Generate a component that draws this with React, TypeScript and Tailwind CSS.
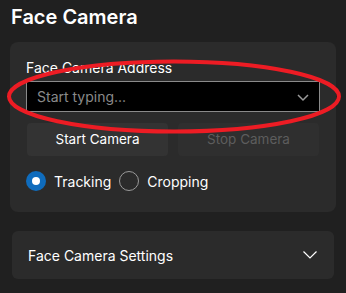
import React from "react";

export default function App() {
  return (
    <div
      className="relative w-[346px] h-[293px] overflow-hidden bg-[#202020] text-white"
      style={{ fontFamily: "Inter, 'Noto Sans', sans-serif" }}
    >
      <div className="pl-[11px] pt-[3px] h-[42px] text-[20px] leading-[28px] font-semibold">Face Camera</div>
      <div className="mx-[10px] rounded-[8px] bg-[#2b2b2b] px-4 pt-4 pb-[21px]">
        <div className="text-[14px] leading-[20px]">Face Camera Address</div>
        <div className="mt-[3px] h-[31px] flex items-center justify-between bg-black border border-[#8a8a8a] pl-[10px] pr-[9px]">
          <span className="text-[14px] text-[#8a8a8a]">Start typing...</span>
          <svg width="14" height="14" viewBox="0 0 14 14" fill="none">
            <path d="M2 5l5 5 5-5" stroke="#9a9a9a" strokeWidth="1.5" />
          </svg>
        </div>
        <div className="mt-[11px] flex gap-[10px] pl-px">
          <div className="h-[33px] w-[141px] flex items-center justify-center rounded-[4px] bg-[#333333] text-[13.5px]">Start Camera</div>
          <div className="h-[33px] w-[141px] flex items-center justify-center rounded-[4px] bg-[#2f2f2f] text-[13.5px] text-[#5d5d5d]">Stop Camera</div>
        </div>
        <div className="mt-[15px] flex items-center h-[20px] text-[14px]">
          <div className="w-[20px] h-[20px] rounded-full bg-[#0f6cbd] flex items-center justify-center">
            <div className="w-[8px] h-[8px] rounded-full bg-white" />
          </div>
          <span className="ml-[8px]">Tracking</span>
          <div className="ml-[8px] w-[20px] h-[20px] rounded-full border border-[#9a9a9a]" />
          <span className="ml-[8px]">Cropping</span>
        </div>
      </div>
      <div className="mt-[19px] ml-[12px] w-[322px] h-[48px] rounded-[6px] bg-[#2b2b2b] flex items-center justify-between pl-4 pr-[17px]">
        <span className="text-[14px]">Face Camera Settings</span>
        <svg width="14" height="8" viewBox="0 0 14 8" fill="none">
          <path d="M0.5 0.5l6.5 6.5 6.5-6.5" stroke="#ffffff" strokeWidth="1.2" />
        </svg>
      </div>
      <svg className="absolute left-0 top-0 pointer-events-none" width="346" height="293">
        <ellipse cx="174" cy="96.5" rx="165" ry="35" fill="none" stroke="#ed1c24" strokeWidth="4" />
      </svg>
    </div>
  );
}
